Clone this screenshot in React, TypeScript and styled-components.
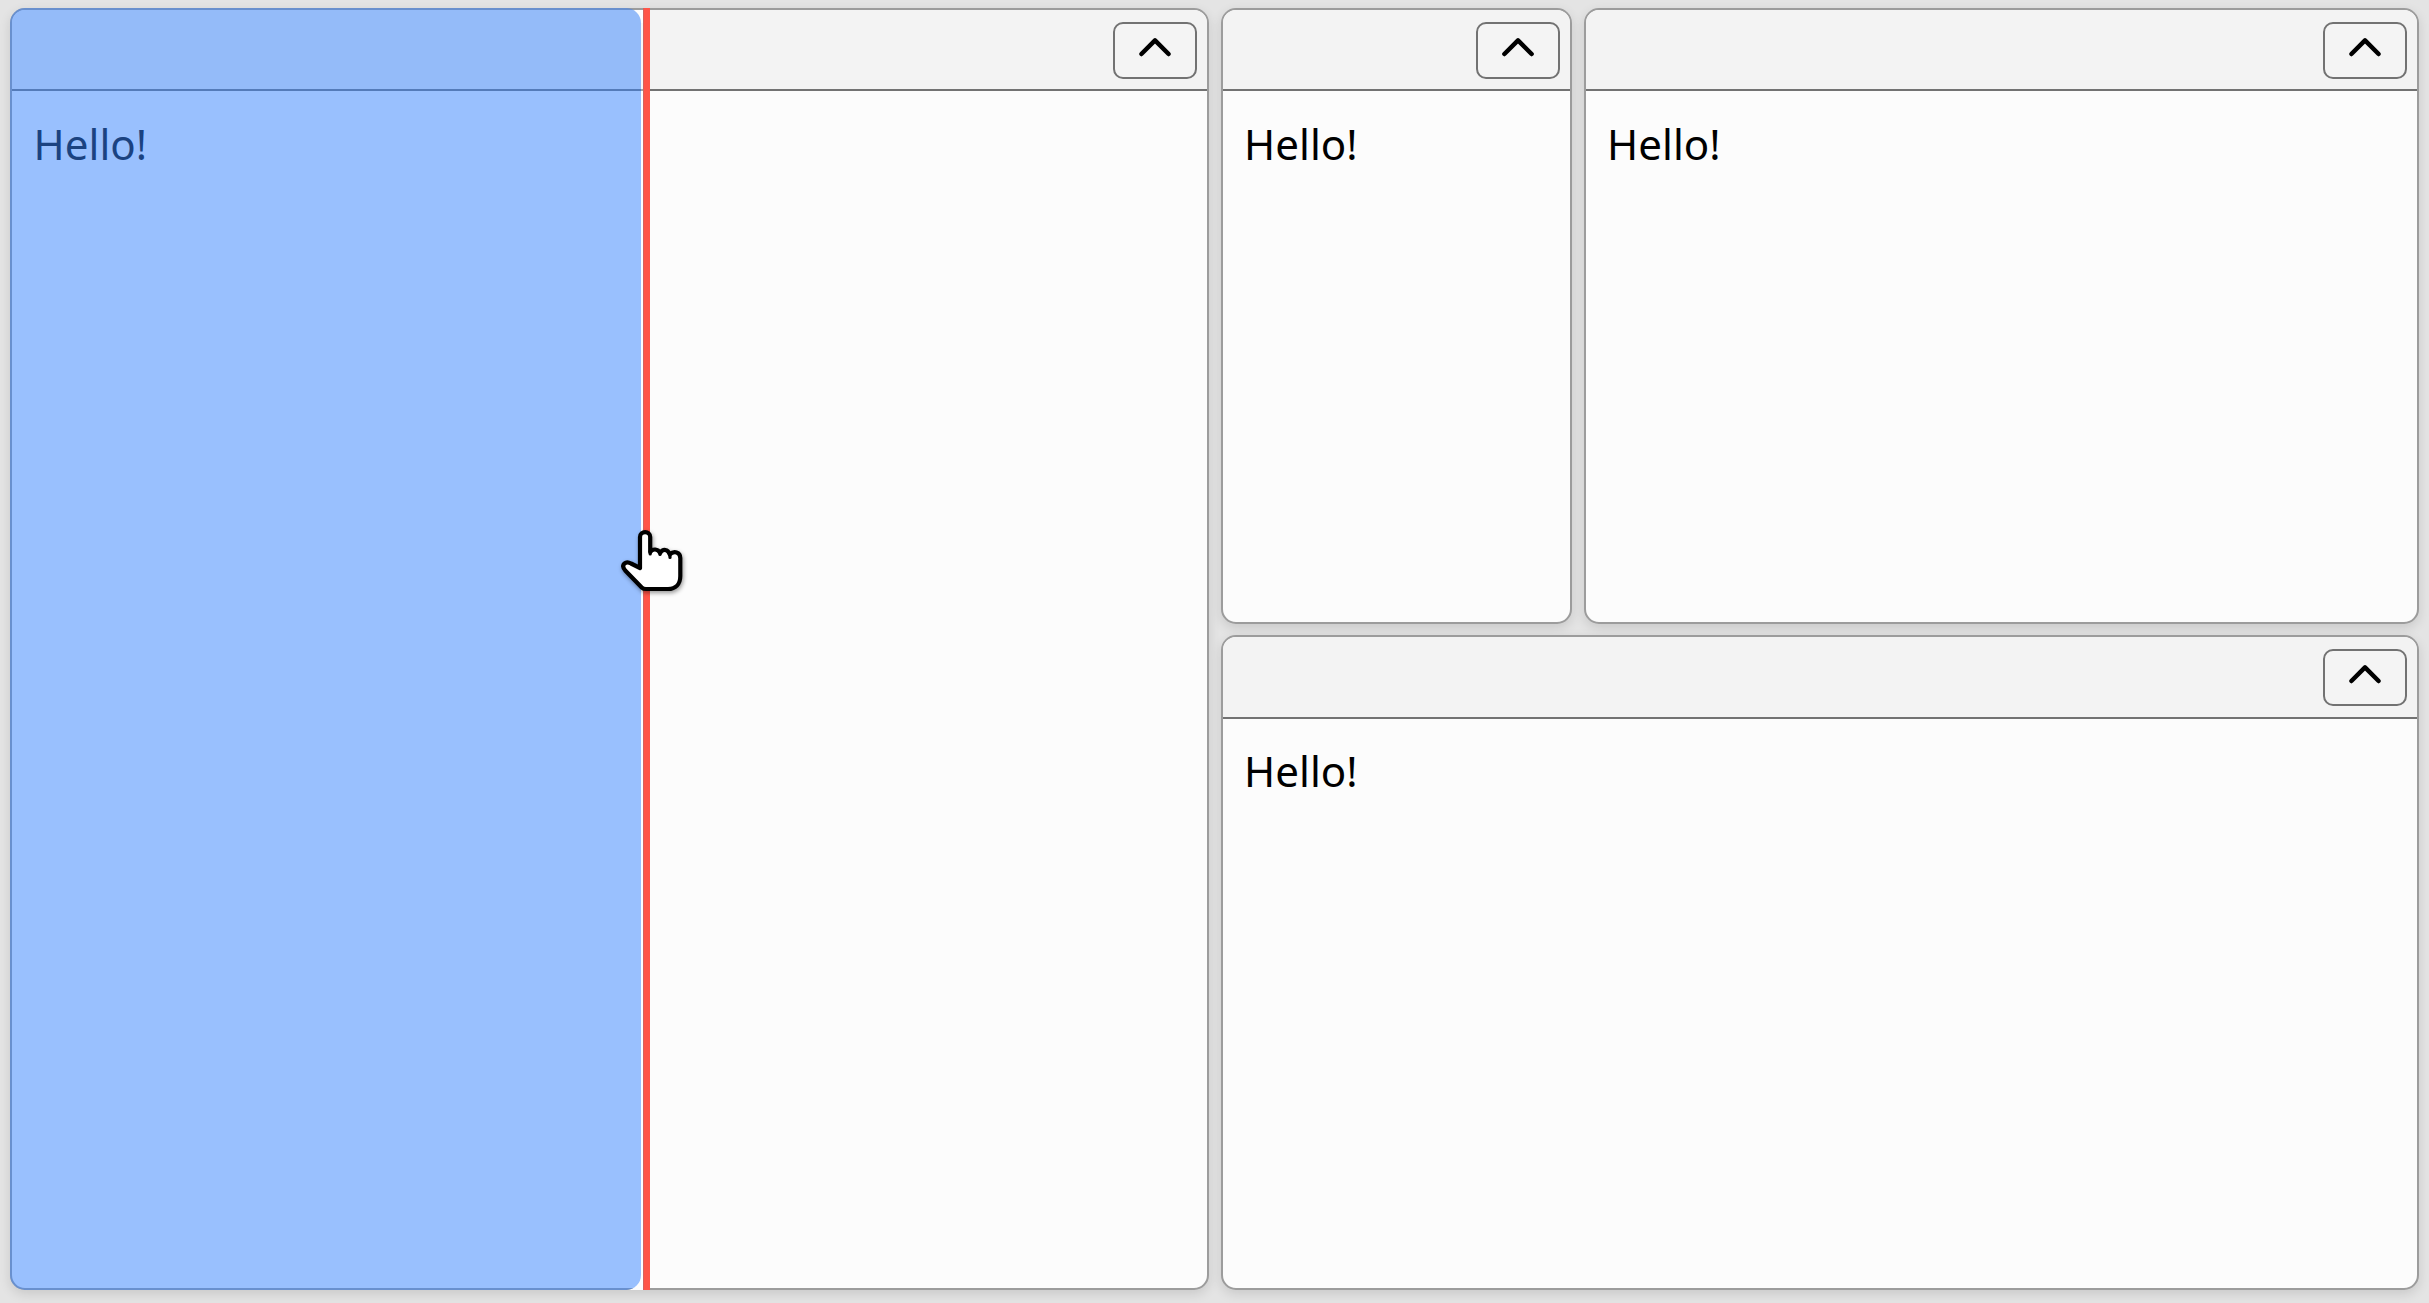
import React from "react";
import styled, { createGlobalStyle } from "styled-components";

const GlobalStyle = createGlobalStyle`
  *, *::before, *::after { box-sizing: border-box; }
  html, body { margin: 0; padding: 0; overflow: hidden; }
  body { background: #e4e4e4; }
`;

const Workspace = styled.main`
  position: relative;
  display: flex;
  gap: 12px;
  width: 100vw;
  height: 100vh;
  padding: 8px 10px 13px;
  background: #e4e4e4;
  color: #000;
  font-family: "Noto Sans", "Open Sans", sans-serif;
  font-size: 42.1px;
`;

const Column = styled.div`
  flex: 1 1 0;
  min-width: 0;
  display: flex;
  flex-direction: column;
  gap: 11.3px;
`;

const Row = styled.div`
  display: flex;
  gap: 12px;
  flex: 0 0 616px;
`;

const PanelFrame = styled.section<{ $width?: number }>`
  position: relative;
  display: flex;
  flex-direction: column;
  flex: ${(p) => (p.$width ? `0 0 ${p.$width}px` : "1 1 0")};
  min-width: 0;
  border: 2px solid #9c9c9c;
  border-radius: 15px;
  background: #fcfcfc;
  box-shadow: 0 4px 12px rgba(0, 0, 0, 0.12);
`;

const PanelHeader = styled.header`
  display: flex;
  align-items: flex-start;
  justify-content: flex-end;
  flex: 0 0 81.4px;
  padding: 12px 10px 0 0;
  border-bottom: 2px solid #727272;
  border-radius: 13px 13px 0 0;
  background: #f3f3f3;
`;

const CollapseButton = styled.button`
  display: flex;
  align-items: flex-start;
  justify-content: center;
  width: 84px;
  height: 57px;
  padding: 13px 0 0;
  border: 2px solid #727272;
  border-radius: 10px;
  background: #f4f4f4;
`;

const PanelBody = styled.div`
  flex: 1;
  padding: 22.2px 21.6px;
  line-height: 60px;
`;

const DropPreview = styled.div`
  position: absolute;
  top: -2px;
  bottom: -2px;
  left: -2px;
  width: 631px;
  border-radius: 15px;
  background: rgba(54, 131, 255, 0.5);
`;

const DropCorner = styled.div<{ $edge: "top" | "bottom" }>`
  position: absolute;
  ${(p) => (p.$edge === "top" ? "top: 0;" : "bottom: -2px;")}
  left: 614px;
  width: 17px;
  height: ${(p) => (p.$edge === "top" ? "13px" : "15px")};
  background: radial-gradient(
    circle at 0 ${(p) => (p.$edge === "top" ? "100%" : "0")},
    transparent 14.5px,
    #fdfdfd 15.5px
  );
`;

const DropGap = styled.div`
  position: absolute;
  top: 0;
  bottom: 0;
  left: 629px;
  width: 2px;
  background: rgba(255, 255, 255, 0.35);
`;

const DropLine = styled.div`
  position: absolute;
  top: -2px;
  bottom: -2px;
  left: 631px;
  width: 7px;
  border-left: 1px solid #d4635e;
  background: #ff5548;
`;

const Pointer = styled.svg`
  position: absolute;
  left: 616px;
  top: 524px;
  filter: drop-shadow(1px 2px 2px rgba(0, 0, 0, 0.4));
`;

function Chevron() {
  return (
    <svg width="34" height="22" viewBox="0 0 34 22" fill="none">
      <path d="M3.4 17 17 3.4 30.6 17" stroke="#000" strokeWidth="4.5" strokeLinecap="round" strokeLinejoin="round" />
    </svg>
  );
}

function Panel({ width, children }: { width?: number; children?: React.ReactNode }) {
  return (
    <PanelFrame $width={width}>
      <PanelHeader>
        <CollapseButton aria-label="Collapse">
          <Chevron />
        </CollapseButton>
      </PanelHeader>
      <PanelBody>Hello!</PanelBody>
      {children}
    </PanelFrame>
  );
}

export default function App() {
  return (
    <>
      <GlobalStyle />
      <Workspace>
        <Column>
          <Panel>
            <DropCorner $edge="top" />
            <DropCorner $edge="bottom" />
            <DropGap />
            <DropPreview />
            <DropLine />
          </Panel>
        </Column>
        <Column>
          <Row>
            <Panel width={351} />
            <Panel />
          </Row>
          <Panel />
        </Column>
        <Pointer width="72" height="72" viewBox="616 524 72 72">
          <path
            d="M640 568V537C640 530.5 650.2 530.5 650.2 537V552C652.5 548.5 658 548.5 660 553C663 548.5 668 549 669.7 554.5C674 550.5 680.3 552 680.3 558V576C680.3 584 675.5 589 668 589H646Q643.5 589 641.5 587.3L625.2 570.5C620.2 564.5 626 560.5 631 563.5L640 568Z"
            fill="#fff"
            stroke="#000"
            strokeWidth="4.2"
            strokeLinejoin="round"
          />
          <path d="M650.2 551V554M660 552V554.5M670 553V557.5" stroke="#000" strokeWidth="3.2" strokeLinecap="round" />
        </Pointer>
      </Workspace>
    </>
  );
}
